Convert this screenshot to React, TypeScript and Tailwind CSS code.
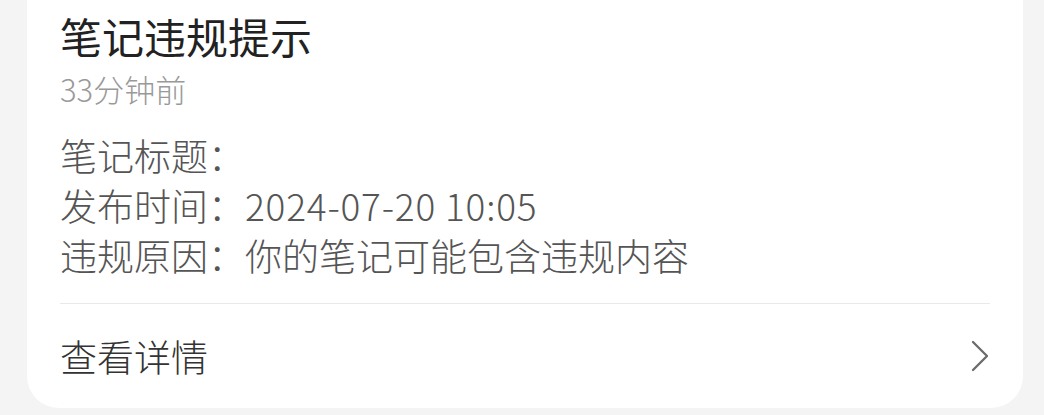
import React from "react";

export default function App() {
  return (
    <div
      className="w-[1044px] h-[415px] bg-[#f4f4f4] px-[27px] overflow-hidden"
      style={{ fontFamily: '"Noto Sans CJK SC", "Noto Sans", sans-serif' }}
    >
      <div className="w-[996px] h-[408px] bg-white rounded-b-[32px] px-[33px] pt-[11px] flex flex-col">
        <div className="h-[50px] leading-[50px] text-[42px] font-normal text-[#222222]">
          笔记违规提示
        </div>
        <div className="mt-[8px] h-[40px] leading-[40px] text-[31px] font-light text-[#999999]">
          33分钟前
        </div>
        <div className="mt-[21px] flex flex-col text-[37px] leading-[50px] font-light text-[#555555]">
          <div className="h-[50px]">笔记标题：</div>
          <div className="h-[50px]">
            发布时间：<span className="tracking-[0.8px]">2024-07-20 10:05</span>
          </div>
          <div className="h-[50px]">违规原因：你的笔记可能包含违规内容</div>
        </div>
        <div className="mt-[23px] h-px bg-[#e9e9e9]" />
        <div className="flex-1 flex items-center justify-between">
          <span className="text-[37px] leading-[50px] font-light text-[#333333]">查看详情</span>
          <svg width="18" height="32" viewBox="0 0 18 32" className="mr-[1px]">
            <polyline
              points="2,2 16,16 2,30"
              fill="none"
              stroke="#6b6b6b"
              strokeWidth="2.3"
              strokeLinecap="round"
              strokeLinejoin="round"
            />
          </svg>
        </div>
      </div>
    </div>
  );
}
